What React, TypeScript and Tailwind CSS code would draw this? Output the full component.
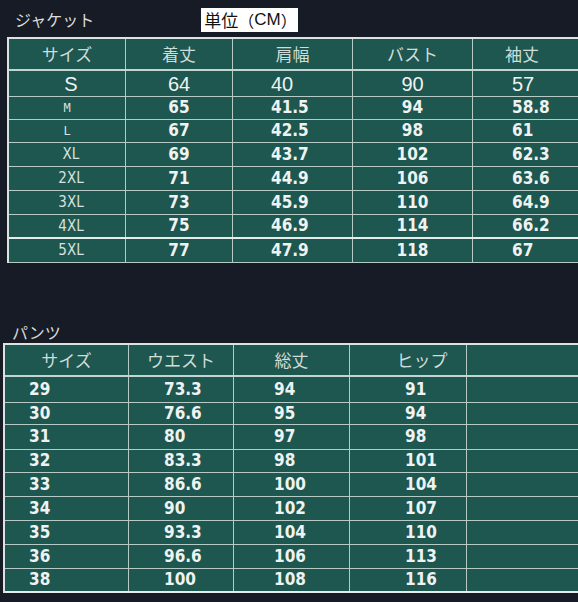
const jacketCols = [117, 107, 120, 120, 140];
const pantsCols = [124, 105, 116, 117, 140];

type Cell = { text: string; align: string; cls: string };

const jacketHead = ["サイズ", "着丈", "肩幅", "バスト", "袖丈"];
const jacketRows = [
  ["S", "64", "40", "90", "57"],
  ["M", "65", "41.5", "94", "58.8"],
  ["L", "67", "42.5", "98", "61"],
  ["XL", "69", "43.7", "102", "62.3"],
  ["2XL", "71", "44.9", "106", "63.6"],
  ["3XL", "73", "45.9", "110", "64.9"],
  ["4XL", "75", "46.9", "114", "66.2"],
  ["5XL", "77", "47.9", "118", "67"],
];
const jacketHeights = [26, 23, 23, 24, 24, 24, 24, 24];

const pantsHead = ["サイズ", "ウエスト", "総丈", "ヒップ", ""];
const pantsRows = [
  ["29", "73.3", "94", "91", ""],
  ["30", "76.6", "95", "94", ""],
  ["31", "80", "97", "98", ""],
  ["32", "83.3", "98", "101", ""],
  ["33", "86.6", "100", "104", ""],
  ["34", "90", "102", "107", ""],
  ["35", "93.3", "104", "110", ""],
  ["36", "96.6", "106", "113", ""],
  ["38", "100", "108", "116", ""],
];
const pantsHeights = [26, 22, 25, 23, 24, 24, 24, 24, 24];

const jp = "font-['Noto_Sans_CJK_JP',sans-serif]";
const num = "font-['DejaVu_Sans_Condensed','DejaVu_Sans',sans-serif] font-bold text-[17px] text-[#eef3f1]";

function Row({
  cols,
  height,
  cells,
  bottom,
}: {
  cols: number[];
  height: number;
  cells: Cell[];
  bottom: string;
}) {
  return (
    <div className={`flex ${bottom}`} style={{ height }}>
      {cells.map((c, i) => (
        <div
          key={i}
          className={`flex shrink-0 items-center border-r border-[#b7cbc6] ${c.align} ${c.cls}`}
          style={{ width: cols[i] }}
        >
          {c.text}
        </div>
      ))}
    </div>
  );
}

function jacketCell(r: number, i: number, text: string): Cell {
  const align =
    i === 2 ? "pl-[38px]" : i === 4 ? "pl-[39px]" : "justify-center";
  if (r === 0) {
    const cls = "font-['Liberation_Sans',sans-serif] text-[20px] text-[#eef3f1]";
    return { text, align: i === 0 ? "justify-center pl-[8px]" : align, cls };
  }
  if (i === 0) {
    if (r <= 2)
      return {
        text,
        align: "justify-center",
        cls: "font-['DejaVu_Sans_Mono',monospace] text-[12px] text-[#d6e2de]",
      };
    return {
      text,
      align: "justify-center pl-[8px]",
      cls: "font-['DejaVu_Sans_Condensed','DejaVu_Sans',sans-serif] text-[15px] text-[#d6e2de]",
    };
  }
  return { text, align, cls: num };
}

function pantsCell(i: number, text: string): Cell {
  const align = ["pl-[24px]", "pl-[35px]", "pl-[40px]", "pl-[55px]", ""][i];
  return { text, align, cls: num };
}

export default function App() {
  return (
    <div className="relative h-[602px] w-[578px] overflow-hidden bg-[#161b25]">
      <div className="flex h-[37px] items-center">
        <span className={`ml-[15px] text-[16px] text-[#dcdcdc] ${jp}`}>ジャケット</span>
        <div
          className={`ml-[107px] mt-[2px] flex h-[24px] items-center whitespace-nowrap bg-white pl-[3px] pr-[1px] text-[16px] text-[#111] ${jp}`}
        >
          <span className="text-[17px]">単位</span>
          <span>（</span>
          <span className="font-['Liberation_Sans',sans-serif] text-[17px]">CM</span>
          <span>）</span>
        </div>
      </div>

      <div className="ml-[7px] w-[610px] border-l-2 border-t-2 border-[#d9e4e1] bg-[#1e5650]">
        <div className="flex h-[32px] border-b-2 border-[#c3d5d1]">
          {jacketHead.map((h, i) => (
            <div
              key={h}
              className={`flex shrink-0 items-center border-r border-[#b7cbc6] text-[17px] text-[#cfdcd8] ${jp} ${
                i === 4 ? "pl-[32px]" : "justify-center"
              }`}
              style={{ width: jacketCols[i] }}
            >
              {h}
            </div>
          ))}
        </div>
        {jacketRows.map((row, r) => (
          <Row
            key={r}
            cols={jacketCols}
            height={jacketHeights[r]}
            bottom={r === 6 ? "border-b-2 border-[#e6eeec]" : "border-b border-[#b7cbc6]"}
            cells={row.map((t, i) => jacketCell(r, i, t))}
          />
        ))}
      </div>

      <div className="mt-[57px] flex h-[23px] items-center">
        <span className={`ml-[12px] text-[16px] text-[#dcdcdc] ${jp}`}>パンツ</span>
      </div>

      <div className="ml-[3px] w-[620px] border-l-2 border-t-2 border-[#d9e4e1] bg-[#1e5650]">
        <div className="flex h-[32px] border-b-2 border-[#c3d5d1]">
          {pantsHead.map((h, i) => (
            <div
              key={i}
              className={`flex shrink-0 items-center justify-center border-r border-[#b7cbc6] text-[17px] text-[#cfdcd8] ${jp} ${
                i === 3 ? "pl-[28px]" : ""
              }`}
              style={{ width: pantsCols[i] }}
            >
              {h}
            </div>
          ))}
        </div>
        {pantsRows.map((row, r) => (
          <Row
            key={r}
            cols={pantsCols}
            height={pantsHeights[r]}
            bottom={r === 8 ? "border-b-2 border-[#e6eeec]" : "border-b border-[#b7cbc6]"}
            cells={row.map((t, i) => pantsCell(i, t))}
          />
        ))}
      </div>
    </div>
  );
}
